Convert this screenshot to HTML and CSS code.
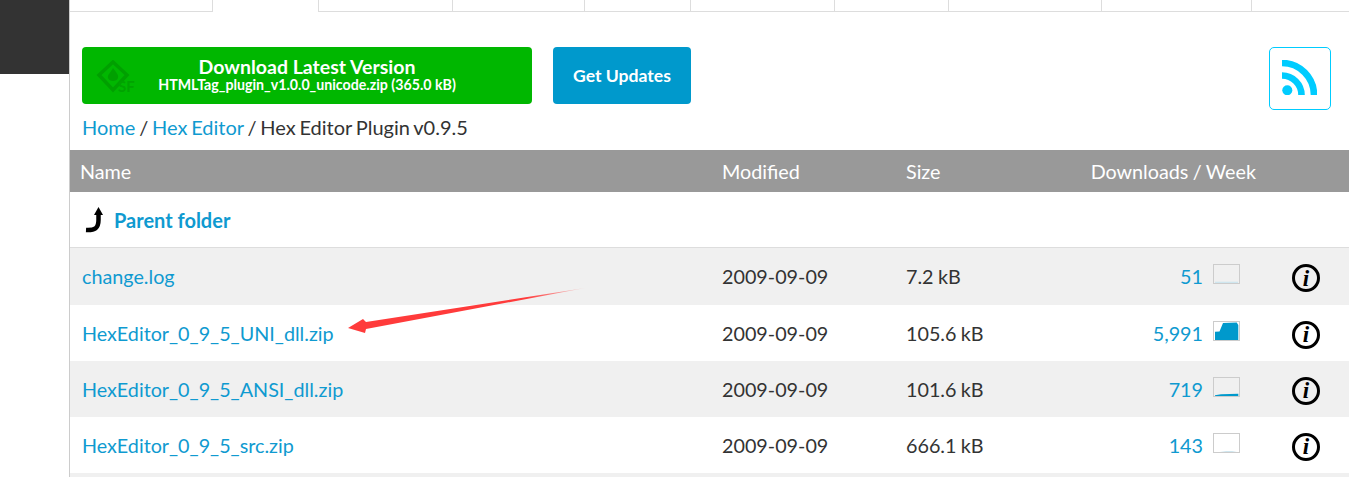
FILE: index.html
```html
<!DOCTYPE html>
<html lang="en">
<head>
<meta charset="utf-8">
<title>Hex Editor Plugin v0.9.5</title>
<link rel="stylesheet" href="styles.css">
</head>
<body>
<div class="page">
  <aside class="side"><div class="side-block"></div></aside>
  <main class="main">
    <nav class="tabs">
      <span class="tab t1"></span><span class="tab t2 active"></span><span class="tab t3"></span><span class="tab t4"></span><span class="tab t5"></span><span class="tab t6"></span><span class="tab t7"></span><span class="tab t8"></span><span class="tab t9"></span><span class="tab t10"></span>
    </nav>
    <div class="actions">
      <a class="btn-download" href="#">
        <span class="sf-logo">
          <svg class="sf-mark" width="40" height="34" viewBox="0 0 40 34"><path class="sf-line" d="M17 2 L31 15 L17 30 L3 15 Z"/><path class="sf-drop" d="M17 8 C20 12 23 15 22 18 C21 22 13 22 12 18 C11 15 15 12 17 8 Z"/></svg>
          <span class="sf-text">SF</span>
        </span>
        <span class="dl-title">Download Latest Version</span>
        <span class="dl-sub">HTMLTag_plugin_v1.0.0_unicode.zip (365.0 kB)</span>
      </a>
      <a class="btn-updates" href="#">Get Updates</a>
      <a class="btn-rss" href="#" aria-label="RSS">
        <svg width="35" height="35" viewBox="0 0 35 35"><circle class="rss-dot" cx="5.3" cy="30.3" r="5"/><path class="rss-arc" d="M0 3 A32 32 0 0 1 32 35"/><path class="rss-arc" d="M0 15.5 A19.5 19.5 0 0 1 19.5 35"/></svg>
      </a>
    </div>
    <div class="crumbs"><a href="#">Home</a> / <a href="#">Hex Editor</a> / Hex Editor Plugin v0.9.5</div>
    <div class="listing">
      <div class="row head">
        <span class="c-name">Name</span><span class="c-date">Modified</span><span class="c-size">Size</span><span class="c-dl">Downloads / Week</span>
      </div>
      <div class="parent">
        <svg width="20" height="27" viewBox="0 0 20 27"><path class="up-line" d="M1 23 C10 23.500 13.500 21 13.500 13 V7"/><path d="M13.500 0 L18 8 H9 Z"/></svg>
        <a href="#">Parent folder</a>
      </div>
      <div class="row file odd first">
        <a class="c-name" href="#">change.log</a><span class="c-date">2009-09-09</span><span class="c-size">7.2 kB</span>
        <span class="c-count"><a href="#">51</a><svg class="spark" width="27" height="20" viewBox="0 0 25 18"><path class="faint" d="M1 18 H24 V16.700 H1 Z"/></svg></span>
        <span class="info">i</span>
      </div>
      <div class="row file">
        <a class="c-name" href="#">HexEditor_0_9_5_UNI_dll.zip</a><span class="c-date">2009-09-09</span><span class="c-size">105.6 kB</span>
        <span class="c-count"><a href="#">5,991</a><svg class="spark" width="27" height="20" viewBox="0 0 25 18"><path class="solid" d="M1 18 V9.700 L5.500 9.500 L9 1 L22.700 0.500 L24.300 3 V18 Z"/></svg></span>
        <span class="info">i</span>
      </div>
      <div class="row file odd">
        <a class="c-name" href="#">HexEditor_0_9_5_ANSI_dll.zip</a><span class="c-date">2009-09-09</span><span class="c-size">101.6 kB</span>
        <span class="c-count"><a href="#">719</a><svg class="spark" width="27" height="20" viewBox="0 0 25 18"><path class="solid" d="M1 18 V17.300 L7 16.300 L24.300 15.700 V18 Z"/></svg></span>
        <span class="info">i</span>
      </div>
      <div class="row file">
        <a class="c-name" href="#">HexEditor_0_9_5_src.zip</a><span class="c-date">2009-09-09</span><span class="c-size">666.1 kB</span>
        <span class="c-count"><a href="#">143</a><svg class="spark" width="27" height="20" viewBox="0 0 25 18"><path class="faint" d="M6 18 L12 17 H18 L23 18 Z"/></svg></span>
        <span class="info">i</span>
      </div>
      <div class="row-end"></div>
      <svg class="callout" width="245" height="50" viewBox="0 0 245 50"><defs><linearGradient id="fade" x1="0" x2="1" y1="0" y2="0"><stop offset="0.75" stop-color="#ff3b3b"/><stop offset="1" stop-color="#ff3b3b" stop-opacity="0.15"/></linearGradient></defs><path fill="url(#fade)" d="M3 40 L18 31 L21 34 L240 0 L21 41 L20 45 Z"/></svg>
    </div>
  </main>
</div>
</body>
</html>
```

FILE: styles.css
```css
* { box-sizing: border-box; }
html, body { margin: 0; height: 477px; overflow: hidden; background: #fff; }
body { font-family: Lato, "Open Sans", sans-serif; color: #333; font-size: 19.75px; word-spacing: -0.7px; }
a { color: #0f9ad0; text-decoration: none; }

.page { display: flex; height: 477px; }
.side { width: 69px; flex: none; }
.side-block { height: 74px; background: #333; }
.main { flex: 1; border-left: 1px solid #ccc; min-width: 0; }

.tabs { display: flex; height: 12px; }
.tab { border-bottom: 1px solid #ddd; border-right: 1px solid #ddd; height: 12px; flex: none; }
.t1 { width: 143px; }
.t2 { width: 106px; border-bottom: 0; border-left: 0; }
.t3 { width: 134px; }
.t4 { width: 132px; }
.t5 { width: 106px; }
.t6 { width: 144px; }
.t7 { width: 114px; }
.t8 { width: 153px; }
.t9 { width: 150px; }
.t10 { flex: 1; border-right: 0; }

.actions { display: flex; align-items: flex-start; padding: 35px 18px 0 12px; height: 98px; word-spacing: 0; }
.btn-download {
  position: relative; width: 450px; height: 57px; background: #00b700; border-radius: 4px; color: #fff;
  display: flex; flex-direction: column; align-items: center; padding-top: 8px;
}
.dl-title { font-size: 19.5px; font-weight: 700; line-height: 23px; }
.dl-sub { font-size: 14.2px; font-weight: 700; line-height: 14px; }
.sf-logo { position: absolute; left: 14px; top: 13px; width: 40px; height: 36px; }
.sf-mark { display: block; }
.sf-line { fill: none; stroke: #00a000; stroke-width: 3.5; }
.sf-drop { fill: #00a000; }
.sf-text { position: absolute; left: 22px; top: 18px; font-size: 15px; line-height: 16px; font-weight: 700; color: #00a300; }
.btn-updates {
  margin-left: 21px; width: 138px; height: 57px; background: #0099cc; border-radius: 4px; color: #fff;
  display: flex; align-items: center; justify-content: center; font-size: 17.6px; font-weight: 700;
}
.btn-rss {
  margin-left: auto; width: 62px; height: 63px; border: 1px solid #00ccff; border-radius: 5px;
  display: flex; padding: 12px 0 0 12px;
}
.rss-dot { fill: #00ccff; }
.rss-arc { fill: none; stroke: #00ccff; stroke-width: 6.6; }

.crumbs { padding-left: 12px; height: 40px; line-height: 34px; color: #333; font-size: 20px; word-spacing: -1.3px; }
.listing { position: relative; }

.row { display: grid; align-items: center; }
.head { height: 42px; background: #999; color: #fff; padding-left: 10px; grid-template-columns: 642px 184px 130px 220px; }
.head .c-dl { white-space: nowrap; text-align: right; }
.parent { height: 56px; border-bottom: 1px solid #ddd; display: flex; align-items: center; padding-left: 15px; gap: 9px; font-weight: 700; font-size: 20px; word-spacing: 0; }
.parent svg { flex: none; margin-top: 2px; }
.up-line { fill: none; stroke: #000; stroke-width: 4.5; }
.file { height: 56px; padding-left: 12px; grid-template-columns: 640px 184px 130px 204px 1fr; }
.file.first { height: 57px; }
.file.odd { background: #f0f0f0; }
.file .c-name { white-space: nowrap; }
.c-date, .c-size { white-space: nowrap; }
.c-count { display: flex; align-items: center; justify-content: flex-end; gap: 10px; }
.spark { flex: none; border: 1px solid #ccc; background: #fff; margin-top: -5px; }
.odd .spark { background: #f0f0f0; }
.solid { fill: #0099cc; }
.faint { fill: #cfe6ef; }
.info {
  justify-self: start; margin-left: 52px; margin-top: 3px; width: 28px; height: 28px; border: 3px solid #000; border-radius: 50%;
  display: flex; align-items: center; justify-content: center;
  font-family: "Liberation Serif", serif; font-style: italic; font-weight: 700; font-size: 23px; line-height: 1; color: #000;
}
.row-end { height: 20px; background: #f0f0f0; }
.callout { position: absolute; left: 275px; top: 138px; }
```
